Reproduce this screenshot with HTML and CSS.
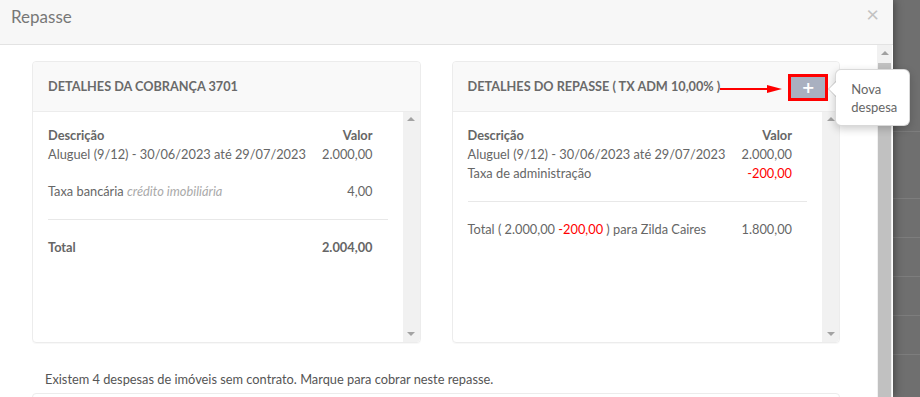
FILE: index.html
```html
<!DOCTYPE html>
<html lang="pt-BR">
<head>
  <meta charset="UTF-8" />
  <meta name="viewport" content="width=device-width, initial-scale=1" />
  <title>Repasse</title>
  <link rel="stylesheet" href="styles.css">
</head>
<body>

<div class="backdrop">
  <div class="modal">
    <div class="modal-header">
      <h4 class="modal-title">Repasse</h4>
      <span class="close">&times;</span>
    </div>

    <div class="modal-body">
      <div class="modal-content">
        <div class="panels">

          <div class="panel">
            <div class="panel-heading">
              <span class="panel-title">Detalhes da cobrança 3701</span>
            </div>
            <div class="panel-wrap">
              <div class="panel-body">
                <table class="items">
                  <tr class="head"><td>Descrição</td><td class="val">Valor</td></tr>
                  <tr><td>Aluguel (9/12) - 30/06/2023 até 29/07/2023</td><td class="val">2.000,00</td></tr>
                  <tr class="spacer"><td colspan="2"></td></tr>
                  <tr><td>Taxa bancária <em class="muted">crédito imobiliária</em></td><td class="val">4,00</td></tr>
                </table>
                <hr>
                <table class="items">
                  <tr class="head"><td>Total</td><td class="val">2.004,00</td></tr>
                </table>
              </div>
              <div class="scrollbar small"><span class="arrow-up"></span><span class="arrow-down"></span></div>
            </div>
          </div>

          <div class="panel">
            <div class="panel-heading">
              <span class="panel-title">Detalhes do repasse ( TX ADM 10,00% )</span>
              <svg class="pointer" width="62" height="12" viewBox="0 0 62 12">
                <line x1="0" y1="6" x2="50" y2="6" stroke="#f00" stroke-width="2"/>
                <polygon points="47,2 62,6 47,10" fill="#f00"/>
              </svg>
              <div class="btn-wrap">
                <button class="btn-add">+</button>
                <div class="popover">Nova despesa</div>
              </div>
            </div>
            <div class="panel-wrap">
              <div class="panel-body">
                <table class="items">
                  <tr class="head"><td>Descrição</td><td class="val">Valor</td></tr>
                  <tr><td>Aluguel (9/12) - 30/06/2023 até 29/07/2023</td><td class="val">2.000,00</td></tr>
                  <tr><td>Taxa de administração</td><td class="val neg">-200,00</td></tr>
                </table>
                <hr>
                <table class="items">
                  <tr><td>Total ( 2.000,00 <span class="neg">-200,00</span> ) para Zilda Caires</td><td class="val">1.800,00</td></tr>
                </table>
              </div>
              <div class="scrollbar small"><span class="arrow-up"></span><span class="arrow-down"></span></div>
            </div>
          </div>

        </div>

        <p class="notice">Existem 4 despesas de imóveis sem contrato. Marque para cobrar neste repasse.</p>
        <div class="next-box"></div>
      </div>

      <div class="scrollbar main">
        <span class="arrow-up"></span>
        <div class="thumb"></div>
      </div>
    </div>
  </div>

  <div class="overlay">
    <div class="row-line"></div>
    <div class="row-line"></div>
    <div class="row-line"></div>
    <div class="row-line"></div>
    <div class="row-line"></div>
    <div class="row-line"></div>
  </div>
</div>

</body>
</html>
```

FILE: styles.css
```css
* {
  box-sizing: border-box;
}

body {
  font-family: Lato, "Open Sans", sans-serif;
  font-size: 12.8px;
  color: #666;
  margin: 0;
  padding: 0;
  background: #6f6f6f;
  overflow: hidden;
}

.backdrop {
  display: flex;
  height: 397px;
  overflow: hidden;
}

.modal {
  width: 893px;
  flex: none;
  background: white;
  display: flex;
  flex-direction: column;
  box-shadow: 2px 0 8px rgba(0, 0, 0, 0.35);
  position: relative;
  z-index: 1;
}

.modal-header {
  height: 45px;
  flex: none;
  background: #f7f7f7;
  border-bottom: 1px solid #e3e3e3;
  display: flex;
  align-items: flex-start;
  justify-content: space-between;
  padding: 5px 14px 0 11px;
}

.modal-title {
  margin: 0;
  font-size: 17px;
  line-height: 24px;
  font-weight: normal;
  color: #777;
}

.close {
  font-size: 22px;
  color: #c2c2c2;
  line-height: 18px;
}

.modal-body {
  flex: 1;
  min-height: 0;
  display: flex;
}

.modal-content {
  flex: 1;
  padding: 16px 37px 0 32px;
}

.panels {
  display: flex;
  gap: 31px;
}

.panel {
  flex: 1;
  min-width: 0;
  height: 282px;
  border: 1px solid #ececec;
  border-radius: 4px;
  display: flex;
  flex-direction: column;
  box-shadow: 0 1px 1px rgba(0, 0, 0, 0.03);
}

.panel-heading {
  height: 50px;
  flex: none;
  background: #f9f9f9;
  border-bottom: 1px solid #ececec;
  border-radius: 4px 4px 0 0;
  display: flex;
  align-items: center;
  padding: 0 15px;
}

.panel-title {
  flex: none;
  white-space: nowrap;
  font-weight: bold;
  text-transform: uppercase;
  color: #6a6a6a;
  font-size: 12.7px;
  margin-bottom: 1px;
}

.pointer {
  flex: none;
  margin: 5px 0 0 0;
}

.btn-wrap {
  flex: none;
  position: relative;
  margin-left: 6px;
  margin-top: 2px;
}

.btn-add {
  width: 40px;
  height: 27px;
  border: 3px solid #f00;
  background: #a9b0c0;
  color: white;
  font-family: "DejaVu Sans", sans-serif;
  font-weight: bold;
  font-size: 16px;
  line-height: 1;
  padding: 0;
  display: block;
}

.popover {
  position: absolute;
  left: 47px;
  top: -5px;
  width: 75px;
  height: 57px;
  padding: 10px 6px 0 15px;
  background: white;
  border: 1px solid rgba(0, 0, 0, 0.15);
  border-radius: 6px;
  box-shadow: 0 3px 8px rgba(0, 0, 0, 0.2);
  font-size: 13px;
  line-height: 18px;
  color: #666;
}

.popover::before {
  content: "";
  position: absolute;
  left: -8px;
  top: 11px;
  border-style: solid;
  border-width: 8px 8px 8px 0;
  border-color: transparent rgba(0, 0, 0, 0.18) transparent transparent;
}

.popover::after {
  content: "";
  position: absolute;
  left: -7px;
  top: 11px;
  border-style: solid;
  border-width: 8px 8px 8px 0;
  border-color: transparent white transparent transparent;
}

.panel-wrap {
  flex: 1;
  display: flex;
  min-height: 0;
}

.panel-body {
  flex: 1;
  padding: 14px 15px 0;
}

.scrollbar {
  background: #f1f1f1;
  display: flex;
  flex-direction: column;
  align-items: center;
}

.scrollbar.small {
  width: 17px;
  flex: none;
  justify-content: space-between;
  padding: 5px 0 6px;
  border-radius: 0 0 4px 0;
}

.arrow-up,
.arrow-down {
  width: 0;
  height: 0;
  border-left: 4px solid transparent;
  border-right: 4px solid transparent;
}

.arrow-up {
  border-bottom: 4px solid #a3a3a3;
}

.arrow-down {
  border-top: 4px solid #a3a3a3;
}

.scrollbar.main {
  width: 15px;
  flex: none;
  margin-right: 1px;
  padding-top: 6px;
}

.scrollbar.main .arrow-up {
  border-bottom-color: #a0a0a0;
}

.thumb {
  margin-top: 8px;
  width: 13px;
  flex: 1;
  background: #c1c1c1;
}

.items {
  width: 100%;
  border-collapse: collapse;
}

.items td {
  padding: 0;
  line-height: 19px;
  white-space: nowrap;
}

.items td.val {
  text-align: right;
  padding-right: 15px;
}

.items tr.head td {
  font-weight: bold;
}

.items tr.spacer td {
  height: 18px;
}

.muted {
  color: #aaa;
}

.neg {
  color: #f00;
}

hr {
  border: none;
  border-top: 1px solid #e8e8e8;
  margin: 18px 0;
}

.notice {
  margin: 27px 0 0 13px;
  line-height: 19px;
  color: #555;
}

.next-box {
  margin-top: 4px;
  height: 20px;
  border: 1px solid #ececec;
  border-radius: 4px;
}

.overlay {
  flex: 1;
  padding-top: 131px;
}

.row-line {
  height: 1px;
  background: #7d7d7d;
  margin-bottom: 66px;
}

.row-line + .row-line {
  margin-bottom: 38px;
}
```
